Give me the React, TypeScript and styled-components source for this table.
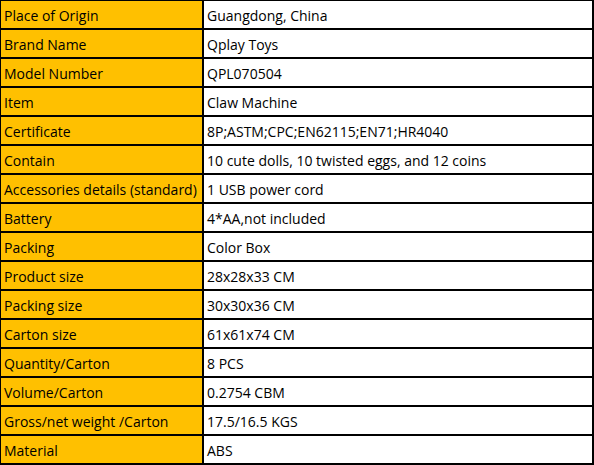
import React from "react";
import styled, { createGlobalStyle } from "styled-components";

const Global = createGlobalStyle`
  html, body { margin: 0; padding: 0; background: #fff; }
`;

const rows: [string, string][] = [
  ["Place of Origin", "Guangdong, China"],
  ["Brand Name", "Qplay Toys"],
  ["Model Number", "QPL070504"],
  ["Item", "Claw Machine"],
  ["Certificate", "8P;ASTM;CPC;EN62115;EN71;HR4040"],
  ["Contain", "10 cute dolls, 10 twisted eggs, and 12 coins"],
  ["Accessories details (standard)", "1 USB power cord"],
  ["Battery", "4*AA,not included"],
  ["Packing", "Color Box"],
  ["Product size", "28x28x33 CM"],
  ["Packing size", "30x30x36 CM"],
  ["Carton size", "61x61x74 CM"],
  ["Quantity/Carton", "8 PCS"],
  ["Volume/Carton", "0.2754 CBM"],
  ["Gross/net weight /Carton", "17.5/16.5 KGS"],
  ["Material", "ABS"],
];

const Table = styled.div`
  display: grid;
  grid-template-columns: 203px 390px;
  grid-auto-rows: 29px;
  width: 594px;
  box-sizing: border-box;
  border-top: 1px solid #000;
  border-left: 1px solid #000;
  font-family: "Open Sans", "Liberation Sans", Arial, sans-serif;
  font-size: 14px;
  color: #000;
`;

const Cell = styled.div<{ $label?: boolean }>`
  display: flex;
  align-items: center;
  padding: 2px 0 0 3px;
  box-sizing: border-box;
  border-right: 2px solid #000;
  border-bottom: 2px solid #000;
  background: ${(p) => (p.$label ? "#FFC000" : "#fff")};
  white-space: nowrap;
  overflow: hidden;
`;

export default function App() {
  return (
    <>
      <Global />
      <Table>
        {rows.map(([k, v]) => (
          <React.Fragment key={k}>
            <Cell $label>{k}</Cell>
            <Cell>{v}</Cell>
          </React.Fragment>
        ))}
      </Table>
    </>
  );
}
